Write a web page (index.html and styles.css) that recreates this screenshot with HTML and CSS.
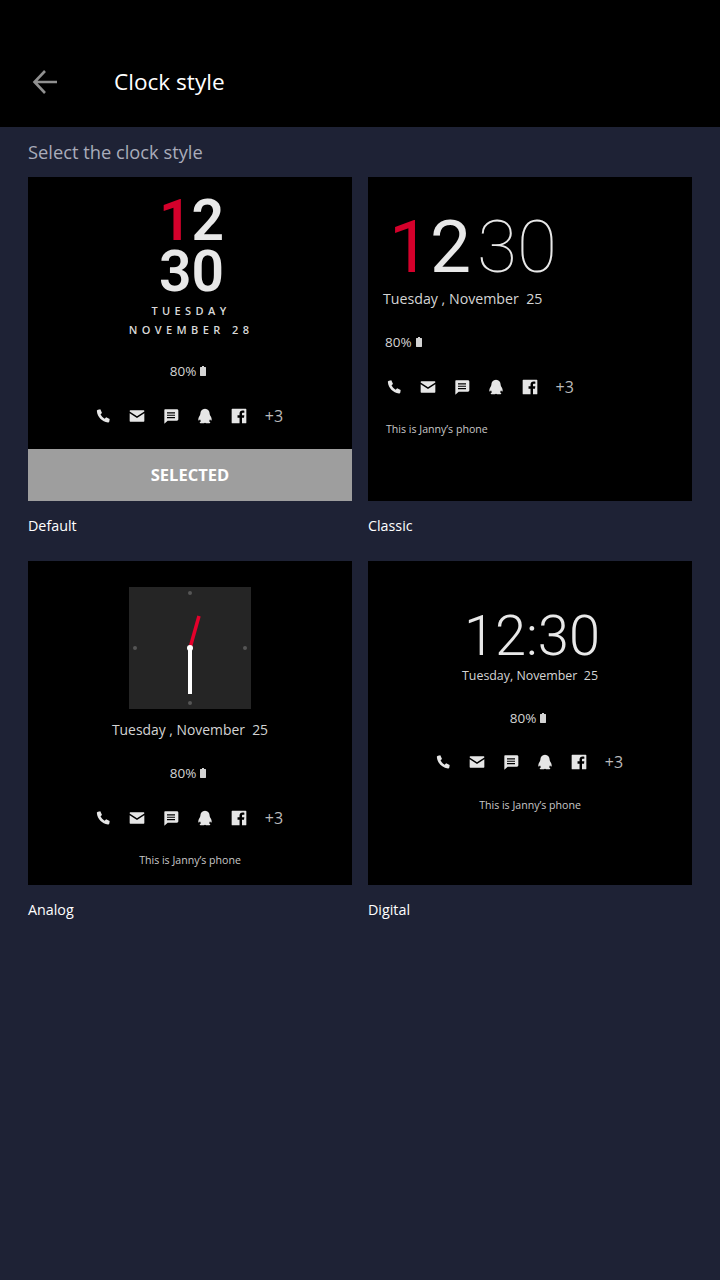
FILE: index.html
```html
<!DOCTYPE html>
<html lang="en">
<head>
<meta charset="utf-8">
<title>Clock style</title>
<link rel="stylesheet" href="styles.css">
</head>
<body>
<svg class="defs" width="0" height="0" aria-hidden="true">
  <symbol id="i-phone" viewBox="0 0 24 24"><path d="M4.5 2.5 8 2l2.5 5.5-2.2 2c1.2 2.8 3.4 5.2 6.2 6.6l2.2-2.1 5.3 2.6-.5 3.600c-.2 1-1 1.600-2 1.500C10.500 20.500 3.500 13.500 2.800 4.500c-.1-1 .6-1.800 1.700-2z"/></symbol>
  <symbol id="i-mail" viewBox="0 0 24 24"><path d="M2 3.500h20c.6 0 1 .4 1 1v.8L12 12.500 1 5.300v-.8c0-.6.4-1 1-1zM1 7.800l11 7.200L23 7.800V19.500c0 .6-.4 1-1 1H2c-.6 0-1-.4-1-1z"/></symbol>
  <symbol id="i-chat" viewBox="0 0 24 24"><path fill-rule="evenodd" d="M3 2h18c1.100 0 2 .9 2 2v13c0 1.100-.9 2-2 2H7l-5 4.500V3c0-.6.4-1 1-1zM6 6.500v1.800h12V6.500zM6 10v1.800h12V10zM6 13.500v1.800h12v-1.800z"/></symbol>
  <symbol id="i-qq" viewBox="0 0 24 24"><path d="M12 1c4.500 0 6.800 3.400 7 7.500.1 1.600.7 2.400 1.500 3.800 1.200 2.100 2 4.500 1.300 6.400-.5.600-1.500-.3-2.300-1.700-.4 1.400-1 2.300-1.600 2.900 1 .5 2 1 2 1.800 0 1-2 1.300-4.300 1.300-1.500 0-2.700-.4-3.600-1-.9.6-2.100 1-3.600 1-2.300 0-4.300-.3-4.300-1.300 0-.8 1-1.300 2-1.800-.6-.6-1.200-1.500-1.600-2.900-.8 1.400-1.800 2.300-2.300 1.700-.7-1.900.1-4.300 1.300-6.400.8-1.400 1.400-2.200 1.500-3.800C5.200 4.400 7.500 1 12 1z"/></symbol>
  <symbol id="i-fb" viewBox="0 0 24 24"><path fill-rule="evenodd" d="M2 1h20c.6 0 1 .4 1 1v20c0 .6-.4 1-1 1h-5.500v-8.500h3l.5-3.500h-3.500V8.800c0-1 .4-1.600 1.700-1.600H20V4c-.5-.1-1.500-.2-2.700-.2-2.700 0-4.500 1.600-4.500 4.600V11h-3v3.500h3V23H2c-.6 0-1-.4-1-1V2c0-.6.4-1 1-1z"/></symbol>
  <symbol id="i-batt" viewBox="0 0 6 10"><path d="M2 0h2v1h1.500c.3 0 .5.2.5.5v8c0 .3-.2.500-.5.500h-5c-.3 0-.5-.2-.5-.5v-8c0-.3.2-.5.500-.5H2z"/></symbol>
</svg>

<header class="topbar">
  <svg class="back" viewBox="0 0 26 26" aria-label="Back"><path d="M25 13H3M13 2 2.500 13 13 24"/></svg>
  <h1 class="title">Clock style</h1>
</header>

<main class="page">
  <p class="hint">Select the clock style</p>
  <div class="styles">

    <section class="style">
      <div class="preview preview-default">
        <div class="screen">
          <div class="stack-time"><span class="red">1</span>2<br>30</div>
          <div class="spaced first">TUESDAY</div>
          <div class="spaced">NOVEMBER 28</div>
          <div class="battery batt-default">80% <svg class="batt"><use href="#i-batt"/></svg></div>
          <div class="icons icons-default">
            <svg class="icon"><use href="#i-phone"/></svg>
            <svg class="icon"><use href="#i-mail"/></svg>
            <svg class="icon"><use href="#i-chat"/></svg>
            <svg class="icon"><use href="#i-qq"/></svg>
            <svg class="icon"><use href="#i-fb"/></svg>
            <span class="more">+3</span>
          </div>
        </div>
        <div class="selected">SELECTED</div>
      </div>
      <div class="label">Default</div>
    </section>

    <section class="style">
      <div class="preview preview-classic">
        <div class="classic-time"><span class="red">1</span>2<span class="thin">30</span></div>
        <div class="date classic-date">Tuesday , November&nbsp; 25</div>
        <div class="battery batt-classic">80% <svg class="batt"><use href="#i-batt"/></svg></div>
        <div class="icons icons-classic">
          <svg class="icon"><use href="#i-phone"/></svg>
          <svg class="icon"><use href="#i-mail"/></svg>
          <svg class="icon"><use href="#i-chat"/></svg>
          <svg class="icon"><use href="#i-qq"/></svg>
          <svg class="icon"><use href="#i-fb"/></svg>
          <span class="more">+3</span>
        </div>
        <div class="owner owner-classic">This is Janny’s phone</div>
      </div>
      <div class="label">Classic</div>
    </section>

    <section class="style">
      <div class="preview preview-analog">
        <svg class="dial" viewBox="0 0 122 122">
          <rect width="122" height="122" fill="#252525"/>
          <g fill="#555"><circle cx="61" cy="6" r="2"/><circle cx="61" cy="116" r="2"/><circle cx="6" cy="61" r="2"/><circle cx="116" cy="61" r="2"/></g>
          <path d="M61 61 70 29" stroke="#e4002b" stroke-width="3.500"/>
          <path d="M61 61V107" stroke="#fff" stroke-width="4"/>
          <circle cx="61" cy="61" r="3" fill="#fff"/>
        </svg>
        <div class="date analog-date">Tuesday , November&nbsp; 25</div>
        <div class="battery batt-analog">80% <svg class="batt"><use href="#i-batt"/></svg></div>
        <div class="icons icons-analog">
          <svg class="icon"><use href="#i-phone"/></svg>
          <svg class="icon"><use href="#i-mail"/></svg>
          <svg class="icon"><use href="#i-chat"/></svg>
          <svg class="icon"><use href="#i-qq"/></svg>
          <svg class="icon"><use href="#i-fb"/></svg>
          <span class="more">+3</span>
        </div>
        <div class="owner owner-analog">This is Janny’s phone</div>
      </div>
      <div class="label">Analog</div>
    </section>

    <section class="style">
      <div class="preview preview-digital">
        <div class="digital-time">12:30</div>
        <div class="date digital-date">Tuesday, November&nbsp; 25</div>
        <div class="battery batt-digital">80% <svg class="batt"><use href="#i-batt"/></svg></div>
        <div class="icons icons-digital">
          <svg class="icon"><use href="#i-phone"/></svg>
          <svg class="icon"><use href="#i-mail"/></svg>
          <svg class="icon"><use href="#i-chat"/></svg>
          <svg class="icon"><use href="#i-qq"/></svg>
          <svg class="icon"><use href="#i-fb"/></svg>
          <span class="more">+3</span>
        </div>
        <div class="owner owner-digital">This is Janny’s phone</div>
      </div>
      <div class="label">Digital</div>
    </section>

  </div>
</main>
</body>
</html>
```
FILE: styles.css
```css
* { box-sizing: border-box; }
html, body { margin: 0; padding: 0; }
body {
  width: 720px;
  height: 1280px;
  overflow: hidden;
  background: #1e2235;
  color: #fff;
  font-family: "Open Sans", "Noto Sans", sans-serif;
}
.defs { display: block; height: 0; }

.topbar {
  height: 127px;
  background: #000;
  display: flex;
  align-items: center;
  padding: 36px 0 0 32px;
}
.back { width: 26px; height: 26px; fill: none; stroke: #909090; stroke-width: 2.6; }
.title { margin: 0 0 0 56px; font-size: 22.600px; font-weight: 400; line-height: 30px; }

.page { padding: 0 28px; }
.hint { margin: 0; height: 50px; line-height: 50px; font-size: 18.300px; color: #a9acba; }
.styles { display: grid; grid-template-columns: 324px 324px; column-gap: 16px; }
.style { height: 384px; }
.preview { height: 324px; background: #000; display: flex; flex-direction: column; align-items: center; color: #d4d4d4; }
.label { height: 50px; line-height: 50px; font-size: 14.300px; color: #fff; }

.screen { flex: 1; width: 100%; display: flex; flex-direction: column; align-items: center; padding-top: 18px; }
.selected { width: 100%; height: 52px; line-height: 52px; background: #9e9e9e; color: #fff; text-align: center; font-size: 16.500px; font-weight: 700; }

.red { color: #d5002b; }
.stack-time { font-size: 57px; font-weight: 600; line-height: 51px; text-align: center; color: #e8e8e8; font-family: Roboto, sans-serif; margin-left: 3px; }
.spaced { font-size: 11px; font-weight: 600; line-height: 19px; letter-spacing: 4.400px; color: #d8d8d8; margin-left: 2px; }
.spaced.first { margin-top: 4px; }
.battery { font-size: 13.500px; line-height: 20px; display: flex; align-items: center; gap: 1px; }
.batt { width: 6px; height: 10px; fill: #d4d4d4; margin-left: 3px; }
.icons { display: flex; align-items: center; gap: 18px; height: 20px; }
.icon { width: 16px; height: 16px; fill: #e6e6e6; }
.more { font-size: 16px; line-height: 20px; color: #bbb; }
.date { font-size: 14.200px; line-height: 20px; }
.owner { font-size: 10.600px; line-height: 16px; color: #c8c8c8; }

.batt-default, .batt-analog, .batt-digital { margin-right: 4px; }
.icons-default, .icons-analog, .icons-digital { margin-right: 2px; }

.batt-default { margin-top: 22px; }
.icons-default { margin-top: 25px; }

.preview-classic { align-items: flex-start; padding-top: 32px; }
.classic-time { font-size: 73px; font-weight: 400; line-height: 76px; margin-left: 21px; color: #e8e8e8; font-family: Roboto, sans-serif; }
.thin { font-weight: 100; margin-left: 6px; }
.classic-date { margin: 4px 0 0 15px; }
.batt-classic { margin: 23px 0 0 17px; }
.icons-classic { margin: 25px 0 0 17.500px; }
.owner-classic { margin: 24px 0 0 18px; }

.preview-analog { padding-top: 26px; }
.dial { width: 122px; height: 122px; flex: none; }
.analog-date { margin-top: 11px; font-size: 13.900px; }
.batt-analog { margin-top: 23px; }
.icons-analog { margin-top: 25px; }
.owner-analog { margin-top: 24px; }

.preview-digital { padding-top: 44px; }
.digital-time { font-size: 56px; font-weight: 350; line-height: 62px; color: #e8e8e8; font-family: Roboto, sans-serif; margin-left: 4px; }
.digital-date { margin-top: -1px; font-size: 12.400px; }
.batt-digital { margin-top: 22px; }
.icons-digital { margin-top: 24px; }
.owner-digital { margin-top: 25px; }
```
